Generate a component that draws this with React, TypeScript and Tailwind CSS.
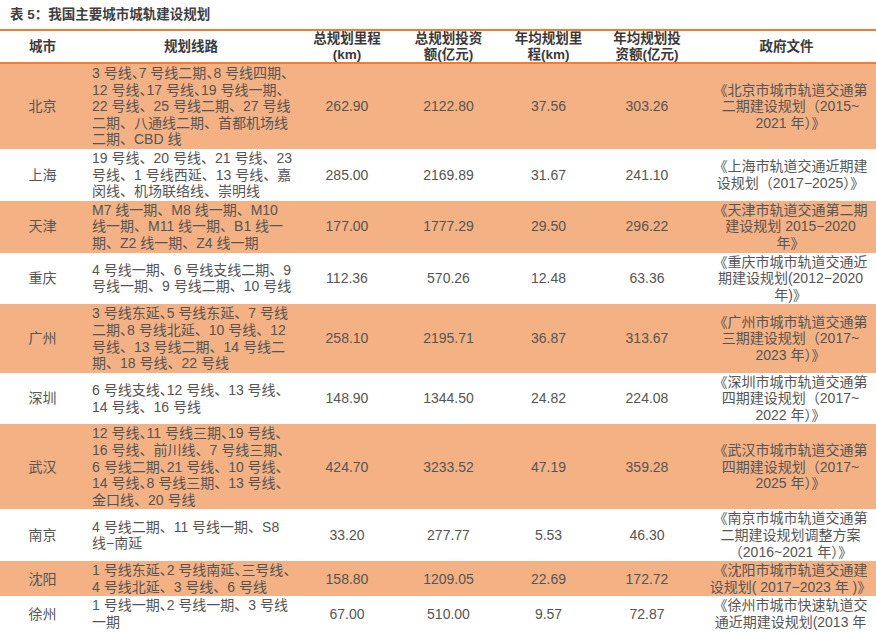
import React from "react";

interface PlanRow {
  city: string;
  lines: string[];
  km: string;
  invest: string;
  avgKm: string;
  avgInvest: string;
  doc: string[];
  orange: boolean;
}

// "|、" marks a pause mark that the original squeezes to half width
const rows: PlanRow[] = [
  {
    city: "北京",
    lines: [
      "3 号线|、7 号线二期|、8 号线四期|、",
      "12 号线|、17 号线|、19 号线一期、",
      "22 号线、25 号线二期、27 号线",
      "二期、八通线二期、首都机场线",
      "二期、CBD 线",
    ],
    km: "262.90",
    invest: "2122.80",
    avgKm: "37.56",
    avgInvest: "303.26",
    doc: ["《北京市城市轨道交通第", "二期建设规划（2015~", "2021 年）》"],
    orange: true,
  },
  {
    city: "上海",
    lines: ["19 号线、20 号线、21 号线、23", "号线、1 号线西延、13 号线、嘉", "闵线、机场联络线、崇明线"],
    km: "285.00",
    invest: "2169.89",
    avgKm: "31.67",
    avgInvest: "241.10",
    doc: ["《上海市轨道交通近期建", "设规划（2017−2025）》"],
    orange: false,
  },
  {
    city: "天津",
    lines: ["M7 线一期、M8 线一期、M10", "线一期、M11 线一期、B1 线一", "期、Z2 线一期、Z4 线一期"],
    km: "177.00",
    invest: "1777.29",
    avgKm: "29.50",
    avgInvest: "296.22",
    doc: ["《天津市轨道交通第二期", "建设规划 2015−2020", "年》"],
    orange: true,
  },
  {
    city: "重庆",
    lines: ["4 号线一期、6 号线支线二期、9", "号线一期、9 号线二期、10 号线"],
    km: "112.36",
    invest: "570.26",
    avgKm: "12.48",
    avgInvest: "63.36",
    doc: ["《重庆市城市轨道交通近", "期建设规划(2012−2020", "年)》"],
    orange: false,
  },
  {
    city: "广州",
    lines: [
      "3 号线东延|、5 号线东延、7 号线",
      "二期|、8 号线北延、10 号线、12",
      "号线、13 号线二期、14 号线二",
      "期、18 号线、22 号线",
    ],
    km: "258.10",
    invest: "2195.71",
    avgKm: "36.87",
    avgInvest: "313.67",
    doc: ["《广州市城市轨道交通第", "三期建设规划（2017~", "2023 年）》"],
    orange: true,
  },
  {
    city: "深圳",
    lines: ["6 号线支线|、12 号线、13 号线、", "14 号线、16 号线"],
    km: "148.90",
    invest: "1344.50",
    avgKm: "24.82",
    avgInvest: "224.08",
    doc: ["《深圳市城市轨道交通第", "四期建设规划（2017~", "2022 年）》"],
    orange: false,
  },
  {
    city: "武汉",
    lines: [
      "12 号线|、11 号线三期|、19 号线、",
      "16 号线、前川线、7 号线三期、",
      "6 号线二期|、21 号线、10 号线、",
      "14 号线|、8 号线三期、13 号线、",
      "金口线、20 号线",
    ],
    km: "424.70",
    invest: "3233.52",
    avgKm: "47.19",
    avgInvest: "359.28",
    doc: ["《武汉市城市轨道交通第", "四期建设规划（2017~", "2025 年）》"],
    orange: true,
  },
  {
    city: "南京",
    lines: ["4 号线二期、11 号线一期、S8", "线−南延"],
    km: "33.20",
    invest: "277.77",
    avgKm: "5.53",
    avgInvest: "46.30",
    doc: ["《南京市城市轨道交通第", "二期建设规划调整方案", "（2016~2021 年）》"],
    orange: false,
  },
  {
    city: "沈阳",
    lines: ["1 号线东延|、2 号线南延|、三号线|、", "4 号线北延、3 号线、6 号线"],
    km: "158.80",
    invest: "1209.05",
    avgKm: "22.69",
    avgInvest: "172.72",
    doc: ["《沈阳市城市轨道交通建", "设规划( 2017−2023 年 )》"],
    orange: true,
  },
  {
    city: "徐州",
    lines: ["^1 号线一期|、2 号线一期、3 号线", "一期"],
    km: "67.00",
    invest: "510.00",
    avgKm: "9.57",
    avgInvest: "72.87",
    doc: ["《徐州市城市快速轨道交", "通近期建设规划(2013 年"],
    orange: false,
  },
];

const cols = "grid grid-cols-[85px_212px_100px_103px_97px_100px_179px]";

function RouteLine({ text }: { text: string }) {
  let first: React.ReactNode = null;
  let body = text;
  if (body.startsWith("^")) {
    first = <span className="text-[#3d5f8f]">{body[1]}</span>;
    body = body.slice(2);
  }
  const parts = body.split("|、");
  return (
    <div className="whitespace-nowrap">
      {first}
      {parts.map((p, i) => (
        <React.Fragment key={i}>
          {p}
          {i < parts.length - 1 && <span className="[font-feature-settings:'halt']">、</span>}
        </React.Fragment>
      ))}
    </div>
  );
}

function HeadCell({ lines }: { lines: string[] }) {
  return (
    <div className="flex flex-col items-center justify-center text-center leading-[15.5px]">
      {lines.map((l) => (
        <div key={l} className="whitespace-nowrap">
          {l}
        </div>
      ))}
    </div>
  );
}

export default function App() {
  return (
    <div className="w-[876px] h-[634px] overflow-hidden bg-white font-['Liberation_Sans','Noto_Sans_CJK_SC',sans-serif]">
      <div className="h-[29px] pl-[10px] pt-[6px] text-[13.5px] font-bold text-[#3f3f3f] leading-[17px]">
        表 5：我国主要城市城轨建设规划
      </div>
      <div className="border-y-2 border-[#ed7d31]">
        <div className={`${cols} h-[31px] text-[13.5px] font-bold text-[#3a3a3a]`}>
          <HeadCell lines={["城市"]} />
          <HeadCell lines={["规划线路"]} />
          <HeadCell lines={["总规划里程", "(km)"]} />
          <HeadCell lines={["总规划投资", "额(亿元)"]} />
          <HeadCell lines={["年均规划里", "程(km)"]} />
          <HeadCell lines={["年均规划投", "资额(亿元)"]} />
          <HeadCell lines={["政府文件"]} />
        </div>
      </div>
      <div className="text-[14px] leading-[16.6px] text-[#555555]">
        {rows.map((r) => (
          <div key={r.city} className={`${cols} py-[1px] ${r.orange ? "bg-[#f4b183]" : "bg-white"}`}>
            <div className="flex items-center justify-center">{r.city}</div>
            <div className="flex flex-col justify-center pl-[7px]">
              {r.lines.map((l, i) => (
                <RouteLine key={i} text={l} />
              ))}
            </div>
            <div className="flex items-center justify-center">{r.km}</div>
            <div className="flex items-center justify-center">{r.invest}</div>
            <div className="flex items-center justify-center">{r.avgKm}</div>
            <div className="flex items-center justify-center">{r.avgInvest}</div>
            <div className="flex flex-col items-center justify-center pl-[8px]">
              {r.doc.map((d, i) => (
                <div key={i} className="whitespace-nowrap">
                  {d}
                </div>
              ))}
            </div>
          </div>
        ))}
      </div>
    </div>
  );
}
